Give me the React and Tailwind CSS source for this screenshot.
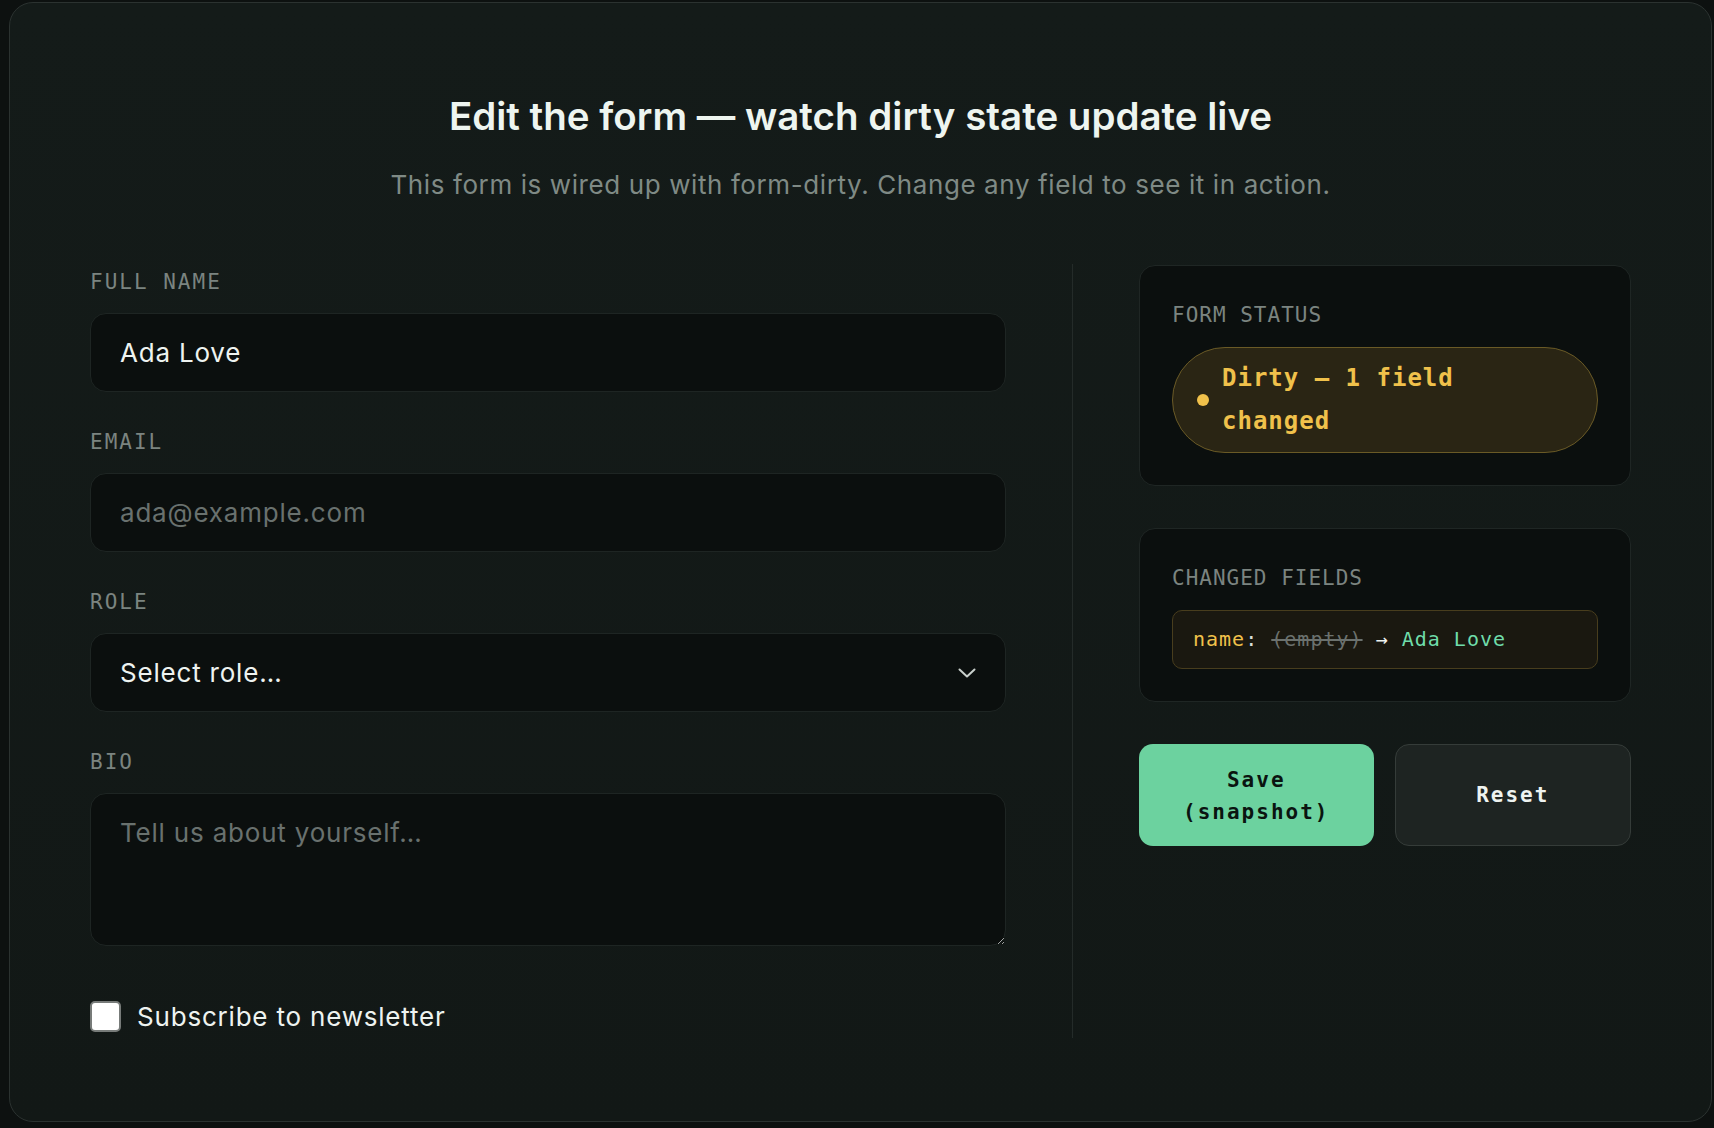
import React, { useState } from "react";

const sans = { fontFamily: "Inter, 'Noto Sans', sans-serif" };
const mono = { fontFamily: "'DejaVu Sans Mono', 'Liberation Mono', monospace" };

const Label = ({ children }) => (
    <label
        style={mono}
        className="block text-[21px] leading-[30px] tracking-[2px] text-[#7b8480] mb-[16px]"
    >
        {children}
    </label>
);

const fieldClass =
    "w-full h-[79px] rounded-[16px] border border-[#1e2523] bg-[#0b0f0e] px-[29px] text-[26px] tracking-[0.8px] text-[#eef3f0] placeholder-[#69716e] outline-none";

const App = () => {
    const [form, setForm] = useState({
        name: "Ada Love",
        email: "",
        role: "",
        bio: "",
        newsletter: false,
    });

    return (
        <div className="min-h-screen bg-[#0d1110] pt-[2px] pl-[9px] pr-[2px] pb-[9px]">
            <div
                style={sans}
                className="rounded-[24px] border border-[#2b3230] bg-gradient-to-b from-[#141b19] to-[#121816] px-[80px] pt-[90px] pb-[83px]"
            >
                <h1 className="text-center text-[38.5px] leading-[46px] font-semibold text-[#eef5f0]">
                    Edit the form — watch dirty state update live
                </h1>
                <p className="mt-[27px] text-center text-[26px] leading-[38px] tracking-[0.6px] text-[#7f8a85]">
                    This form is wired up with form-dirty. Change any field to see it in action.
                </p>

                <div className="mt-[60px] flex">
                    {/* left: the form */}
                    <div className="w-[916px] flex flex-col pt-[3px] pb-[2px]">
                        <Label>FULL NAME</Label>
                        <input
                            className={fieldClass}
                            value={form.name}
                            onChange={(e) => setForm({ ...form, name: e.target.value })}
                        />

                        <div className="mt-[35px]">
                            <Label>EMAIL</Label>
                            <input
                                className={fieldClass}
                                value={form.email}
                                placeholder="ada@example.com"
                                onChange={(e) => setForm({ ...form, email: e.target.value })}
                            />
                        </div>

                        <div className="mt-[35px]">
                            <Label>ROLE</Label>
                            <div className="relative">
                                <select
                                    className={fieldClass + " appearance-none"}
                                    value={form.role}
                                    onChange={(e) => setForm({ ...form, role: e.target.value })}
                                >
                                    <option value="">Select role…</option>
                                    <option value="engineer">Engineer</option>
                                    <option value="designer">Designer</option>
                                </select>
                                <svg
                                    className="pointer-events-none absolute right-[30px] top-1/2 -translate-y-1/2"
                                    width="18"
                                    height="10"
                                    viewBox="0 0 18 10"
                                    fill="none"
                                >
                                    <path
                                        d="M1.5 1.5L9 8.5L16.5 1.5"
                                        stroke="#c9d0cc"
                                        strokeWidth="2"
                                        strokeLinecap="round"
                                        strokeLinejoin="round"
                                    />
                                </svg>
                            </div>
                        </div>

                        <div className="mt-[35px]">
                            <Label>BIO</Label>
                            <textarea
                                className="block w-full h-[153px] rounded-[16px] border border-[#1e2523] bg-[#0b0f0e] px-[29px] pt-[19px] text-[26px] leading-[39px] tracking-[0.8px] text-[#eef3f0] placeholder-[#69716e] outline-none"
                                placeholder="Tell us about yourself…"
                                value={form.bio}
                                onChange={(e) => setForm({ ...form, bio: e.target.value })}
                            />
                        </div>

                        <label className="mt-[51px] flex items-center gap-[16px] text-[26px] leading-[39px] tracking-[0.8px] text-[#eef3f0]">
                            <input
                                type="checkbox"
                                checked={form.newsletter}
                                onChange={(e) => setForm({ ...form, newsletter: e.target.checked })}
                                className="appearance-none w-[31px] h-[31px] rounded-[5px] border-2 border-[#777b79] bg-white"
                            />
                            Subscribe to newsletter
                        </label>
                    </div>

                    <div className="w-px bg-[#242b29] mx-[66px]" />

                    {/* right: status */}
                    <div className="flex-1 flex flex-col gap-[42px] pt-[1px]" style={mono}>
                        <div className="rounded-[16px] border border-[#1f2624] bg-[#0b0f0e] px-[32px] pt-[34px] pb-[32px]">
                            <div className="text-[21px] leading-[30px] tracking-[1px] text-[#7b8480] mb-[17px]">
                                FORM STATUS
                            </div>
                            <div className="flex items-center gap-[13px] rounded-full border border-[#6a5a26] bg-[#2a2514] pl-[24px] pr-[24px] py-[9px]">
                                <span className="w-[12px] h-[12px] rounded-full bg-[#f0c14b] shrink-0" />
                                <span className="text-[24px] leading-[43px] font-bold tracking-[1px] text-[#f0c14b]">
                                    Dirty — 1 field
                                    <br />
                                    changed
                                </span>
                            </div>
                        </div>

                        <div className="rounded-[16px] border border-[#1f2624] bg-[#0b0f0e] px-[32px] pt-[34px] pb-[32px]">
                            <div className="text-[21px] leading-[30px] tracking-[1px] text-[#7b8480] mb-[17px]">
                                CHANGED FIELDS
                            </div>
                            <div className="rounded-[10px] border border-[#483d1d] bg-[#1a1810] px-[20px] py-[13px] text-[20px] leading-[31px] tracking-[1px] whitespace-nowrap">
                                <span className="text-[#f0c14b]">name</span>
                                <span className="text-[#d7ddda]">: </span>
                                <span className="text-[#6b716e] line-through">(empty)</span>
                                <span className="text-[#eef3f0]"> → </span>
                                <span className="text-[#6fdcaa]">Ada Love</span>
                            </div>
                        </div>

                        <div className="flex gap-[21px]">
                            <button className="flex-1 h-[102px] rounded-[14px] bg-[#6cd29f] px-[24px] pt-[2px] text-[21px] leading-[32px] font-bold tracking-[2px] text-[#0a1410]">
                                Save
                                <br />
                                (snapshot)
                            </button>
                            <button className="flex-1 h-[102px] rounded-[14px] border border-[#353c39] bg-[#1e2422] px-[24px] text-[21px] leading-[32px] font-bold tracking-[2px] text-[#eef3f0]">
                                Reset
                            </button>
                        </div>
                    </div>
                </div>
            </div>
        </div>
    );
};

export default App;
